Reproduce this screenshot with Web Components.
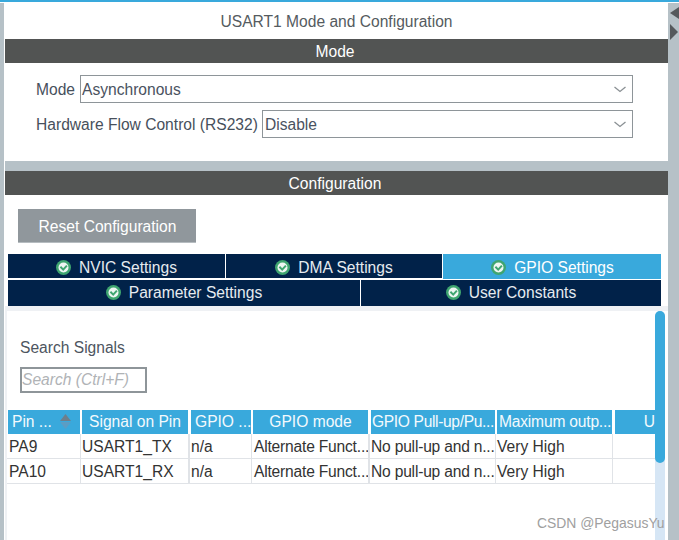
<!DOCTYPE html>
<html><head><meta charset="utf-8">
<style>
html,body{margin:0;padding:0;background:#fff;}
body{width:679px;height:540px;overflow:hidden;font-family:"Liberation Sans",Arial,sans-serif;}
</style></head>
<body>
<mx-app></mx-app>
<template id="t-app">
<style>
:host{display:flex;flex-direction:column;width:679px;height:540px;position:relative;overflow:hidden;background:#fff;font:15.6px "Liberation Sans",Arial,sans-serif;color:#47505c}
.top{height:2px;background:#39a9dc;flex:none}
.gapline{height:1px;flex:none}
.body{flex:1;display:flex;min-height:0}
.left{width:4px;background:#b6c1c7;flex:none}
.main{width:663px;margin-left:1px;flex:none;display:flex;flex-direction:column;min-height:0}
.right{flex:1;background:#b6c1c7;display:flex;flex-direction:column;align-items:flex-end}
.right svg{display:block}
.title{height:36px;flex:none;display:flex;align-items:center;justify-content:center;color:#555b60;padding-top:1px;box-sizing:border-box}
.mode{height:98px;flex:none;padding:12px 35px 0 31px;box-sizing:border-box;display:flex;flex-direction:column;gap:7px}
.row{display:flex;align-items:center;gap:3px}
.row span{white-space:nowrap;padding-top:2px}
.row mx-select{margin-left:auto}
.sep{height:10px;background:#b6c1c7;flex:none}
.cfg{flex:1;display:flex;flex-direction:column;min-height:0}
.btnrow{flex:none;padding:14px 0 11px 13px}
.tabs{flex:none;padding:0 7px 0 3px}
.tabrow{display:flex;align-items:flex-start}
.inner{flex:1;min-height:0;background:#eff1f4;padding-top:5px;display:flex}
.pane{flex:1;background:#fff;margin-left:2px;display:flex;min-width:0;min-height:0}
.content{flex:1;min-width:0;overflow:hidden}
.search{padding:27px 0 0 13px;height:99px;box-sizing:border-box}
.search label{display:block;color:#4d5560;line-height:20px}
.search .inp{margin-top:9px;width:127px;height:26px;box-sizing:border-box;border:2px solid #8e9599;color:#b0b3b6;font-style:italic;line-height:22px;padding-left:0;white-space:nowrap;overflow:hidden}
.sb{width:10px;flex:none;margin:0 3px 0 0;background:#d6e6f5;border-radius:5px 5px 0 0;display:flex;flex-direction:column}
.thumb{height:152px;background:#39a9dc;border-radius:5px}
.wm{position:absolute;left:537px;top:514px;font-size:13.9px;color:#a0a0a0;line-height:18px;white-space:nowrap}
</style>
<div class="top"></div><div class="gapline"></div>
<div class="body">
  <div class="left"></div>
  <div class="main">
    <div class="title">USART1 Mode and Configuration</div>
    <mx-bar>Mode</mx-bar>
    <div class="mode">
      <div class="row"><span>Mode</span><mx-select style="width:553px">Asynchronous</mx-select></div>
      <div class="row"><span>Hardware Flow Control (RS232)</span><mx-select style="width:371px;padding-left:2px">Disable</mx-select></div>
    </div>
    <div class="sep"></div>
    <div class="cfg">
      <mx-bar>Configuration</mx-bar>
      <div class="btnrow"><mx-button>Reset Configuration</mx-button></div>
      <div class="tabs">
        <div class="tabrow">
          <mx-tab style="width:217px;padding-top:3px">NVIC Settings</mx-tab>
          <mx-tab style="width:216px;margin-left:1px;padding-top:3px">DMA Settings</mx-tab>
          <mx-tab active style="width:218px;margin-left:1px">GPIO Settings</mx-tab>
        </div>
        <div class="tabrow">
          <mx-tab style="width:352px;height:26px;margin-top:1px">Parameter Settings</mx-tab>
          <mx-tab style="width:300px;height:26px;margin-top:1px;margin-left:1px">User Constants</mx-tab>
        </div>
      </div>
      <div class="inner"><div class="pane">
        <div class="content">
          <div class="search"><label>Search Signals</label><div class="inp">Search (Ctrl+F)</div></div>
          <mx-table></mx-table>
        </div>
        <div class="sb"><div class="thumb"></div></div>
      </div></div>
    </div>
  </div>
  <div class="right">
    <svg width="11" height="40" viewBox="0 0 11 40"><path d="M11 4V16L2 10Z" fill="#55595c"/><path d="M2 21L10 29L2 37Z" fill="#55595c"/></svg>
  </div>
</div>
<div class="wm">CSDN @PegasusYu</div>
</template>
<template id="t-bar">
<style>:host{display:flex;height:24px;flex:none;background:#525453;color:#fff;align-items:center;justify-content:center;padding:1px 3px 0 0;box-sizing:border-box}</style><slot></slot>
</template>
<template id="t-select">
<style>:host{display:flex;align-items:center;justify-content:space-between;height:28px;box-sizing:border-box;border:1px solid #8e9599;background:#fff;padding:1px 6px 0 1px;color:#4a5260;flex:none}svg{display:block}</style><slot></slot>
<svg width="12" height="7" viewBox="0 0 12 7"><path d="M.5 1L6 5.5L11.5 1" fill="none" stroke="#8a9094" stroke-width="1.3"/></svg>
</template>
<template id="t-button">
<style>:host{display:inline-flex;width:178px;height:34px;background:#90979c;color:#fff;align-items:center;justify-content:center;border-bottom:1px solid #b6bcc0;box-sizing:border-box;padding:2px 0 0 1px}</style><slot></slot>
</template>
<template id="t-tab">
<style>:host{display:flex;height:24px;box-sizing:border-box;background:#012249;color:#e6ebf0;align-items:center;justify-content:center;gap:8px;flex:none}
:host([active]){background:#39a9dc;height:25px;color:#fff;padding:3px 0 0 1px}
svg{display:block;flex:none;margin-bottom:1px}</style>
<svg width="15" height="15" viewBox="0 0 15 15"><circle cx="7.5" cy="7.5" r="7.5" fill="#3fa570"/><circle cx="7.5" cy="7.5" r="5" fill="#eef6f2"/><path d="M4.4 6.8L7.2 9.6L10.9 5.6" fill="none" stroke="#3fa570" stroke-width="2"/></svg>
<span><slot></slot></span>
</template>
<template id="t-table">
<style>
:host{display:block;font:15.6px "Liberation Sans",Arial,sans-serif;color:#333}
.h{display:flex;height:24px;padding-left:1px}
.h div{flex:none;background:#39a9dc;color:#f3f9fd;line-height:24px;white-space:nowrap;overflow:hidden;text-align:center;position:relative;box-sizing:border-box}
.h .l{text-align:left;padding-left:4px}
.h .u{text-align:right}
.d{display:flex;height:25px}
.d div{flex:none;line-height:25px;white-space:nowrap;overflow:hidden;border-bottom:1px solid #e0e3e7;border-right:1px solid #e0e3e7;padding-left:1px;box-sizing:border-box;height:25px}
.d .b{border-right-width:2px}
.t{letter-spacing:-.2px}
.t2{letter-spacing:-.35px}
.sort{position:absolute;right:9px;top:4px;display:block}
</style>
<div class="h">
  <div class="l" style="width:72px">Pin ...<svg class="sort" width="11" height="15" viewBox="0 0 11 15"><path d="M5.5 0L11 7H0Z" fill="#6d7f8c"/><path d="M0 8H11L5.5 15Z" fill="#5b9dc4"/></svg></div>
  <div style="width:106px;margin-left:2px">Signal on Pin</div>
  <div class="l" style="width:60px;margin-left:3px">GPIO ...</div>
  <div style="width:115px;margin-left:2px">GPIO mode</div>
  <div class="l t2" style="width:124px;margin-left:3px;padding-left:1px">GPIO Pull-up/Pu...</div>
  <div class="l t" style="width:115px;margin-left:2px;padding-left:2px">Maximum outp...</div>
  <div class="u" style="width:40px;margin-left:3px">U</div>
</div>
<div class="d"><div style="width:74px;padding-left:2px">PA9</div><div class="b" style="width:109px">USART1_TX</div><div style="width:62px">n/a</div><div class="b t" style="width:118px;padding-left:2px">Alternate Funct...</div><div class="t" style="width:126px">No pull-up and n...</div><div style="width:117px">Very High</div><div style="width:42px;border-right:0"></div></div>
<div class="d"><div style="width:74px;padding-left:2px">PA10</div><div class="b" style="width:109px">USART1_RX</div><div style="width:62px">n/a</div><div class="b t" style="width:118px;padding-left:2px">Alternate Funct...</div><div class="t" style="width:126px">No pull-up and n...</div><div style="width:117px">Very High</div><div style="width:42px;border-right:0"></div></div>
</template>
<script>
const def=(n,t)=>customElements.define(n,class extends HTMLElement{constructor(){super();this.attachShadow({mode:'open'}).appendChild(document.getElementById(t).content.cloneNode(true));}});
def('mx-bar','t-bar');def('mx-select','t-select');def('mx-button','t-button');def('mx-tab','t-tab');def('mx-table','t-table');def('mx-app','t-app');
</script>
</body></html>
